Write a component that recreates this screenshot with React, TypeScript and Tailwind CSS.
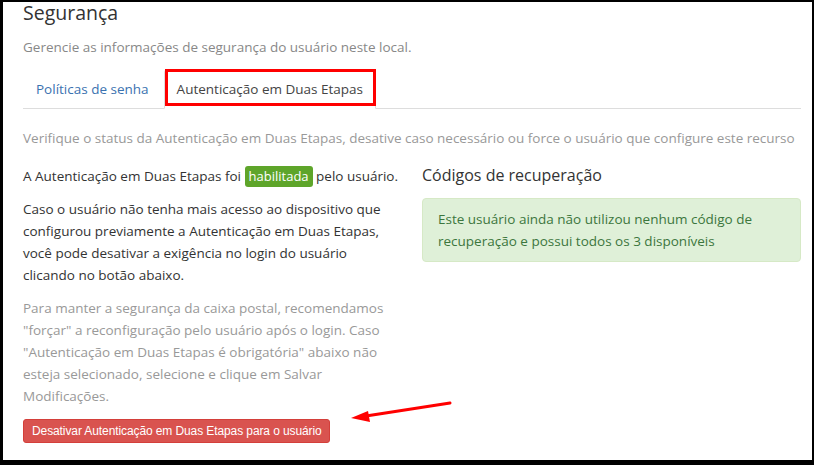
import React from "react";

const App: React.FC = () => {
  return (
    <div className="w-[814px] h-[465px] bg-black pt-[2px] pl-[3px] pr-[2px] pb-[5px]">
      <div className="relative h-full bg-white pl-[20px] pr-[11px] font-['Open_Sans',sans-serif] text-[13.5px] text-[#333]">
        {/* Header */}
        <h1 className="text-[19.5px] leading-[22px] text-[#333]">Segurança</h1>
        <p className="mt-[13px] leading-[20px] text-[#888]">
          Gerencie as informações de segurança do usuário neste local.
        </p>

        {/* Tabs */}
        <ul className="mt-[12px] flex border-b border-[#ddd]">
          <li className="-mb-px mr-[2px]">
            <a className="block px-[12px] py-[9px] leading-[20px] border border-transparent rounded-t-[4px] text-[#3a72b0]">
              Políticas de senha
            </a>
          </li>
          <li className="relative -mb-px mr-[2px]">
            <a className="block px-[12px] py-[9px] leading-[20px] border border-[#ddd] border-b-transparent rounded-t-[4px] bg-white text-[#444]">
              Autenticação em Duas Etapas
            </a>
            <span className="absolute left-[1px] right-0 top-0 bottom-[3px] border-[3px] border-[#ff0000]" />
          </li>
        </ul>

        <p className="mt-[19px] leading-[20px] whitespace-nowrap text-[#999]">
          Verifique o status da Autenticação em Duas Etapas, desative caso necessário ou force o usuário que configure este recurso
        </p>

        {/* Columns */}
        <div className="mt-[17px] grid grid-cols-[375px_1fr] gap-x-[24px]">
          <div className="leading-[22px]">
            <p className="mb-[11px] whitespace-nowrap">
              A Autenticação em Duas Etapas foi{" "}
              <span className="inline-block rounded-[3px] bg-[#5ea52a] px-[4px] py-px text-[13px] leading-[19px] text-white">
                habilitada
              </span>{" "}
              pelo usuário.
            </p>
            <p className="mb-[11px]">
              Caso o usuário não tenha mais acesso ao dispositivo que configurou previamente a Autenticação em Duas Etapas, você pode desativar a exigência no login do usuário clicando no botão abaixo.
            </p>
            <p className="text-[#999]">
              Para manter a segurança da caixa postal, recomendamos "forçar" a reconfiguração pelo usuário após o login. Caso "Autenticação em Duas Etapas é obrigatória" abaixo não esteja selecionado, selecione e clique em Salvar Modificações.
            </p>
            <button className="mt-[12px] rounded-[3px] border border-[#d43f3a] bg-[#d9534f] pl-[8px] pr-[7px] py-[3px] font-['Liberation_Sans',Arial,sans-serif] text-[12px] leading-[16px] tracking-[-0.1px] text-white">
              Desativar Autenticação em Duas Etapas para o usuário
            </button>
          </div>

          <div>
            <h3 className="text-[16px] leading-[20px] text-[#333]">Códigos de recuperação</h3>
            <div className="mt-[13px] rounded-[4px] border border-[#d6e9c6] bg-[#dff0d8] px-[15px] py-[9px] leading-[22px] text-[#3c763d]">
              Este usuário ainda não utilizou nenhum código de recuperação e possui todos os 3 disponíveis
            </div>
          </div>
        </div>

        {/* Annotation arrow */}
        <svg className="absolute left-[343px] top-[393px]" width="110" height="30" viewBox="0 0 110 30">
          <line x1="104" y1="8" x2="20" y2="21" stroke="#ff0000" strokeWidth="3" strokeLinecap="round" />
          <polygon points="5,23 22,16 24,27" fill="#ff0000" />
        </svg>
      </div>
    </div>
  );
};

export default App;
